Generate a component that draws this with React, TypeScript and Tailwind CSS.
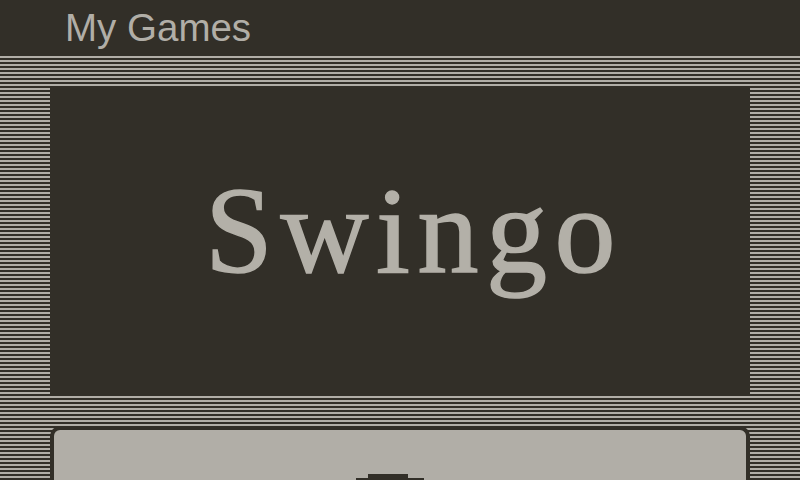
import React from 'react';

const App = () => {
  return (
    <div className="w-[800px] h-[480px] overflow-hidden bg-[#322f28] flex flex-col">
      <header className="h-[56px] shrink-0 pl-[65px] text-[38.5px] leading-[56px] text-[#b1aea7] font-['Liberation_Sans',sans-serif]">
        My Games
      </header>

      <main className="flex-1 flex flex-col px-[50px] pt-[30px] bg-[repeating-linear-gradient(to_bottom,#b1aea7_0px,#b1aea7_2px,#322f28_2px,#322f28_4px)]">
        <section className="h-[310px] shrink-0 bg-[#322f28] flex justify-center pt-[84px] pl-[28px]">
          <h1 className="text-[122px] leading-none text-[#b3b0a8] font-['Liberation_Serif',serif] tracking-[7.5px] [-webkit-text-stroke:1.5px_#b3b0a8]">
            Swingo
          </h1>
        </section>

        <section className="mt-[30px] flex-1 bg-[#b1aea7] border-4 border-[#322f28] rounded-t-[10px] border-b-0">
          <div className="flex flex-col items-start pl-[302px] pt-[44px]">
            <div className="ml-[12px] w-[40px] h-[4px] bg-[#322f28]" />
            <div className="w-[68px] h-[4px] bg-[#322f28]" />
          </div>
        </section>
      </main>
    </div>
  );
};

export default App;
